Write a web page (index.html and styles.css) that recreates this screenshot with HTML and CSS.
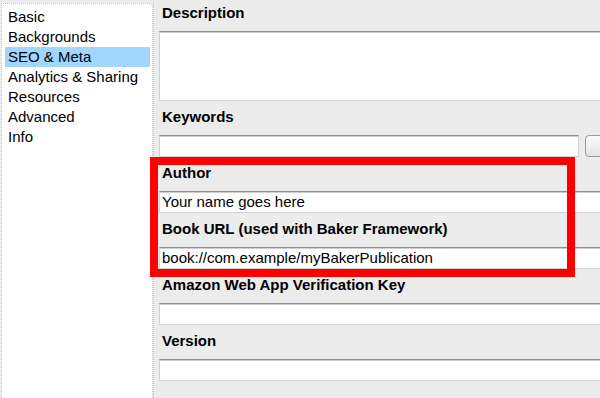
FILE: index.html
```html
<!DOCTYPE html>
<html>
<head>
<meta charset="utf-8">
<link rel="stylesheet" href="styles.css">
</head>
<body>
<div class="app">
  <ul class="sidebar">
    <li>Basic</li>
    <li>Backgrounds</li>
    <li class="active">SEO &amp; Meta</li>
    <li>Analytics &amp; Sharing</li>
    <li>Resources</li>
    <li>Advanced</li>
    <li>Info</li>
  </ul>
  <div class="main">
    <div class="fields">
      <div class="field">
        <div class="label">Description</div>
        <div class="input textarea"></div>
      </div>
      <div class="field">
        <div class="label">Keywords</div>
        <div class="row">
          <div class="input short"></div>
          <div class="button"></div>
        </div>
      </div>
      <div class="field">
        <div class="label">Author</div>
        <div class="input">Your name goes here</div>
      </div>
      <div class="field">
        <div class="label">Book URL (used with Baker Framework)</div>
        <div class="input">book://com.example/myBakerPublication</div>
      </div>
      <div class="field">
        <div class="label">Amazon Web App Verification Key</div>
        <div class="input"></div>
      </div>
      <div class="field">
        <div class="label">Version</div>
        <div class="input"></div>
      </div>
    </div>
  </div>
  <div class="highlight"></div>
</div>
</body>
</html>
```
FILE: styles.css
```css
html, body {
  margin: 0;
  padding: 0;
  background: #ececec;
  font-family: "Liberation Sans", Arial, Helvetica, sans-serif;
  color: #000;
}
.app {
  position: relative;
  display: flex;
  width: 600px;
  height: 398px;
  overflow: hidden;
}
.sidebar {
  list-style: none;
  margin: 3px 0 0 1px;
  padding: 3px 2px 0 3px;
  width: 145px;
  height: 400px;
  background: #fff;
  border: 1px dotted #c4c4c4;
  border-radius: 0 5px 0 0;
  font-size: 15px;
}
.sidebar li {
  height: 20px;
  line-height: 20px;
  padding-left: 3px;
  white-space: nowrap;
}
.sidebar li.active {
  background: #a2d5ff;
}
.main {
  flex: 1;
  height: 396px;
  border-left: 1px dotted #c4c4c4;
  border-bottom: 1px dotted #c4c4c4;
  border-top: 1px dotted #d8d8d8;
  margin-top: -1px;
  padding: 3px 0 0 5px;
  overflow: hidden;
}
.fields {
  width: 470px;
}
.field {
  margin-bottom: 6px;
}
.label {
  font-weight: bold;
  font-size: 15px;
  line-height: 20px;
  padding-left: 3px;
  margin-bottom: 8px;
  white-space: nowrap;
}
.input {
  box-sizing: border-box;
  height: 22px;
  background: #fff;
  border: 1px solid #d2d2d2;
  border-top: 1px solid #8c8c8c;
  box-shadow: inset 0 1px 0 #cfcfcf;
  font-size: 15px;
  line-height: 20px;
  padding-left: 2px;
  white-space: nowrap;
}
.textarea {
  height: 70px;
}
.row {
  display: flex;
  gap: 6px;
}
.input.short {
  width: 420px;
}
.button {
  box-sizing: border-box;
  width: 40px;
  height: 22px;
  border: 1px solid #9c9c9c;
  border-radius: 4px;
  background: linear-gradient(#fbfbfb, #e4e4e4);
}
.highlight {
  position: absolute;
  left: 150px;
  top: 157px;
  width: 425px;
  height: 120px;
  box-sizing: border-box;
  border: 8px solid #ff0000;
}
```
